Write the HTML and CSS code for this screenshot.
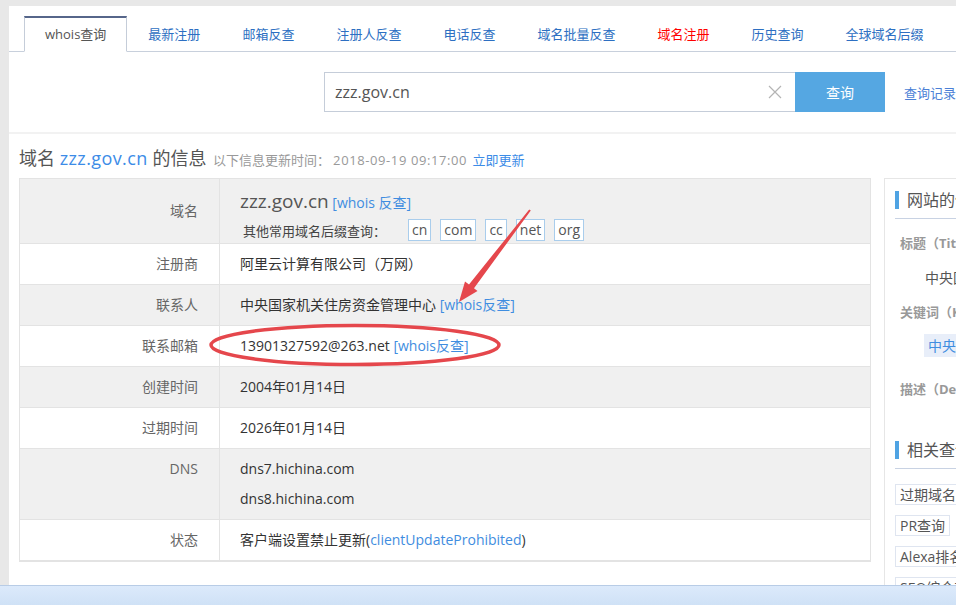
FILE: index.html
```html
<!DOCTYPE html>
<html lang="zh-CN">
<head>
<meta charset="utf-8">
<title>whois查询</title>
<link rel="stylesheet" href="styles.css">
</head>
<body>
<div class="card-top">
  <nav class="tabs">
    <a class="tab active">whois查询</a>
    <a class="tab">最新注册</a>
    <a class="tab">邮箱反查</a>
    <a class="tab">注册人反查</a>
    <a class="tab">电话反查</a>
    <a class="tab">域名批量反查</a>
    <a class="tab red">域名注册</a>
    <a class="tab">历史查询</a>
    <a class="tab">全球域名后缀</a>
  </nav>
  <div class="search">
    <div class="search-input">
      <span class="search-text">zzz.gov.cn</span>
      <svg class="clear" width="14" height="14" viewBox="0 0 14 14"><path d="M1 1L13 13M13 1L1 13" stroke="#b4b4b4" stroke-width="1.2" fill="none"/></svg>
    </div>
    <button class="search-btn">查询</button>
    <a class="history">查询记录</a>
  </div>
</div>

<div class="card-main">
  <h1 class="title">域名 <span class="blue wide">zzz.gov.cn</span> 的信息 <small class="update">以下信息更新时间<span class="colon">：</span><span class="time">2018-09-19 09:17:00</span> <a class="blue">立即更新</a></small></h1>

  <div class="info">
    <div class="row gray first">
      <div class="label center">域名</div>
      <div class="value">
        <div class="domain-line"><span class="domain">zzz.gov.cn</span> <a class="link">[whois 反查]</a></div>
        <div class="suffix-line">
          <span class="suffix-label">其他常用域名后缀查询：</span>
          <span class="suffix">cn</span>
          <span class="suffix">com</span>
          <span class="suffix">cc</span>
          <span class="suffix">net</span>
          <span class="suffix">org</span>
        </div>
      </div>
    </div>
    <div class="row">
      <div class="label">注册商</div>
      <div class="value">阿里云计算有限公司（万网）</div>
    </div>
    <div class="row gray">
      <div class="label">联系人</div>
      <div class="value">中央国家机关住房资金管理中心 <a class="link">[whois反查]</a></div>
    </div>
    <div class="row">
      <div class="label">联系邮箱</div>
      <div class="value">13901327592@263.net <a class="link">[whois反查]</a></div>
    </div>
    <div class="row gray">
      <div class="label">创建时间</div>
      <div class="value">2004年01月14日</div>
    </div>
    <div class="row">
      <div class="label">过期时间</div>
      <div class="value">2026年01月14日</div>
    </div>
    <div class="row gray dns">
      <div class="label">DNS</div>
      <div class="value">
        <div>dns7.hichina.com</div>
        <div>dns8.hichina.com</div>
      </div>
    </div>
    <div class="row last">
      <div class="label">状态</div>
      <div class="value">客户端设置禁止更新(<a class="link">clientUpdateProhibited</a>)</div>
    </div>
  </div>

  <aside class="side">
    <div class="side-head">网站的信息</div>
    <div class="side-key">标题（Title）</div>
    <div class="side-val">中央国家机关住房资金管理中心</div>
    <div class="side-key">关键词（Keywords）</div>
    <div class="side-tag">中央国家机关</div>
    <div class="side-key">描述（Description）</div>
    <div class="side-head second">相关查询</div>
    <div class="side-btns">
      <a class="side-btn">过期域名查询</a>
      <a class="side-btn">PR查询</a>
      <a class="side-btn">Alexa排名</a>
      <a class="side-btn">SEO综合查询</a>
    </div>
  </aside>
</div>

<svg class="annot" width="956" height="605" viewBox="0 0 956 605">
  <ellipse cx="355" cy="345" rx="144" ry="19.5" fill="none" stroke="#e5474c" stroke-width="3.5"/>
  <polygon points="530.8,210.5 474,288.2 477.5,291 459,302 465,281.4 469,284.4 529.2,209.5" fill="#e5474c"/>
</svg>

<div class="statusbar"></div>
</body>
</html>
```

FILE: styles.css
```css
* { box-sizing: border-box; }
html, body { margin: 0; padding: 0; }
body {
  background: #e8e8e8;
  font-family: "Open Sans", "Noto Sans CJK SC", sans-serif;
  color: #333;
  font-size: 14px;
  width: 956px;
  height: 605px;
  overflow: hidden;
  position: relative;
}
a { text-decoration: none; cursor: pointer; }

.card-top {
  margin: 6px 0 0 9px;
  background: #fff;
  border-bottom: 2px solid #f2f2f2;
  padding-bottom: 20px;
}
.tabs {
  display: flex;
  padding: 10px 0 0 15px;
  border-bottom: 1px solid #c8d0dc;
}
.tab {
  display: block;
  padding: 0 20px;
  height: 36px;
  line-height: 33px;
  font-size: 13px;
  color: #2d6fc2;
  border: 1px solid transparent;
  border-top: 2px solid transparent;
  margin-bottom: -1px;
  white-space: nowrap;
}
.tab.active {
  color: #555;
  background: #fff;
  border-color: #c5cdd9;
  border-top-color: #56668a;
  border-bottom-color: #fff;
}
.tab.red { color: #f00; }

.search {
  display: flex;
  align-items: center;
  margin-top: 20px;
  padding-left: 315px;
  height: 40px;
}
.search-input {
  width: 471px;
  height: 40px;
  border: 1px solid #c5cdd9;
  border-right: none;
  display: flex;
  align-items: center;
  justify-content: space-between;
  padding: 0 13px 0 10px;
}
.search-text { font-size: 16px; color: #555; }
.clear { display: block; }
.search-btn {
  width: 90px;
  height: 40px;
  border: none;
  background: #55a7e2;
  color: #fff;
  font-family: inherit;
  font-size: 14px;
  padding: 0;
}
.history {
  margin-left: 19px;
  font-size: 13px;
  color: #4b7fd6;
  white-space: nowrap;
}

.card-main {
  margin-left: 9px;
  background: #fff;
  height: 480px;
  padding: 12px 0 0 10px;
  display: grid;
  grid-template-columns: 852px 1fr;
  grid-template-rows: auto 1fr;
  column-gap: 13px;
}
.title {
  grid-column: 1 / -1;
  margin: 0 0 8px;
  font-size: 18px;
  font-weight: normal;
  line-height: 24px;
  height: 24px;
  color: #555;
  white-space: nowrap;
}
.blue { color: #3c8ce7; }
.wide { letter-spacing: 0.4px; }
.update { font-size: 13px; color: #999; margin-left: 2px; }
.colon { margin-right: 3px; }
.time { letter-spacing: 0.6px; margin-right: 2px; }

.info {
  border: 1px solid #e3e3e3;
  border-bottom-width: 2px;
  align-self: start;
}
.row {
  display: grid;
  grid-template-columns: 200px 1fr;
  border-bottom: 1px solid #e3e3e3;
  background: #fff;
}
.row.last { border-bottom: none; }
.row.gray { background: #f0f0f0; }
.label {
  border-right: 1px solid #e3e3e3;
  text-align: right;
  padding-right: 21px;
  line-height: 40px;
  color: #666;
  font-size: 14px;
}
.value {
  padding-left: 20px;
  line-height: 40px;
  color: #333;
  font-size: 14px;
  white-space: nowrap;
}
.link { color: #3f8de0; }

.row.first .label { line-height: 64px; }
.row.first .value { padding-top: 9px; padding-bottom: 2px; line-height: normal; }
.domain-line { height: 26px; line-height: 26px; }
.domain { font-size: 19px; color: #555; }
.suffix-line {
  margin-top: 5px;
  display: flex;
  align-items: center;
  gap: 9px;
  height: 22px;
}
.suffix-label { font-size: 13px; color: #444; padding-left: 3px; margin-right: 13px; }
.suffix {
  border: 1px solid #a9cdec;
  background: #fff;
  height: 22px;
  line-height: 20px;
  padding: 0 3px;
  color: #555;
  font-size: 14px;
}

.row.dns .label { padding-top: 5px; line-height: 30px; }
.row.dns .value { padding: 5px 0 5px 20px; line-height: 30px; }

.side {
  border: 1px solid #e6e6e6;
  border-right: none;
  border-bottom: none;
  padding: 12px 0 0 10px;
  white-space: nowrap;
  overflow: hidden;
}
.side-head {
  height: 28px;
  border-bottom: 1px solid #c8d2e3;
  padding-bottom: 9px;
  display: flex;
  font-size: 16px;
  line-height: 18px;
  color: #555;
}
.side-head::before {
  content: "";
  width: 4px;
  height: 18px;
  background: #4fa3e3;
  margin-right: 8px;
  flex: none;
}
.side-head.second { margin-top: 42px; }
.side-key {
  margin-top: 14px;
  padding-left: 5px;
  line-height: 20px;
  font-size: 13px;
  font-weight: bold;
  color: #999;
}
.side-val {
  margin-top: 15px;
  padding-left: 30px;
  line-height: 20px;
  color: #555;
}
.side-tag {
  margin: 12px 0 0 29px;
  height: 23px;
  line-height: 23px;
  padding-left: 4px;
  background: #e8eef9;
  color: #3f8de0;
}
.side-tag + .side-key { margin-top: 22px; }
.side-btns {
  margin-top: 15px;
  display: flex;
  flex-direction: column;
  align-items: flex-start;
  gap: 10px;
}
.side-btn {
  border: 1px solid #dfe5f0;
  padding: 0 4px;
  height: 21px;
  line-height: 19px;
  color: #555;
  font-size: 14px;
}

.annot {
  position: absolute;
  left: 0;
  top: 0;
  pointer-events: none;
}
.statusbar {
  position: absolute;
  left: 0;
  right: 0;
  bottom: 0;
  height: 20px;
  border-top: 1px solid #b8cce6;
  background: linear-gradient(#dceafb, #cfe1f6);
}
```
